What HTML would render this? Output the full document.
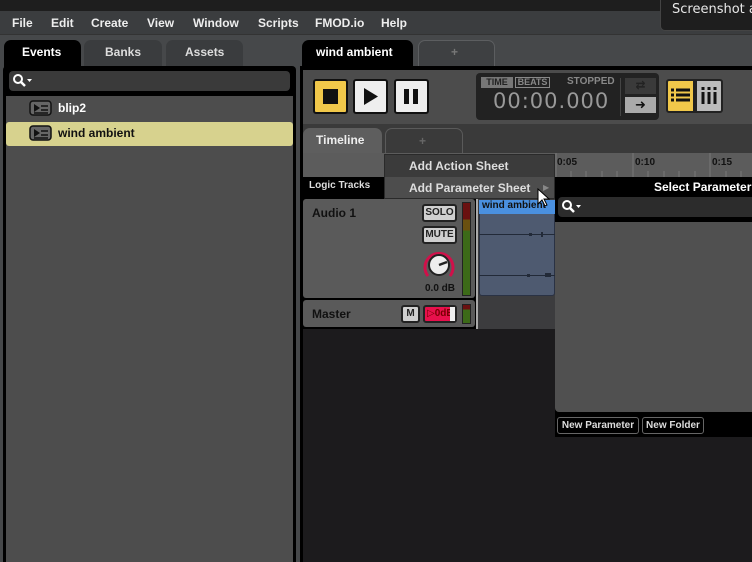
<!DOCTYPE html><html><head><meta charset="utf-8"><style>
*{margin:0;padding:0;box-sizing:border-box}
body{width:752px;height:562px;overflow:hidden;background:#46484a;font-family:"Liberation Sans","DejaVu Sans",sans-serif;font-weight:bold;position:relative;color:#fff}
.a{position:absolute}
.t{font-size:12px;white-space:nowrap}
.btn{position:absolute;background:#d0d0d0;border:2px solid #222;border-radius:3px;color:#222;font-size:10px;text-align:center}
</style></head><body>
<div class="a" style="left:0;top:0;width:752px;height:11px;background:#1e1e1e"></div>
<div class="a" style="left:0;top:11px;width:752px;height:24px;background:#3b3d3f;border-bottom:1px solid #333"></div>
<div class="a t" style="left:12px;top:16px;color:#eee">File</div>
<div class="a t" style="left:51px;top:16px;color:#eee">Edit</div>
<div class="a t" style="left:91px;top:16px;color:#eee">Create</div>
<div class="a t" style="left:147px;top:16px;color:#eee">View</div>
<div class="a t" style="left:193px;top:16px;color:#eee">Window</div>
<div class="a t" style="left:258px;top:16px;color:#eee">Scripts</div>
<div class="a t" style="left:315px;top:16px;color:#eee">FMOD.io</div>
<div class="a t" style="left:381px;top:16px;color:#eee">Help</div>
<div class="a" style="left:660px;top:0;width:92px;height:31px;background:#1e1e1e;border-radius:0 0 0 5px;border-left:1px solid #444;border-bottom:1px solid #444;overflow:hidden"></div>
<div class="a" style="left:672px;top:2px;font-size:13px;font-weight:normal;color:#e8e8e8;font-family:'DejaVu Sans',sans-serif;white-space:nowrap">Screenshot a</div>

<!-- left tabs -->
<div class="a" style="left:4px;top:40px;width:77px;height:28px;background:#000;border-radius:7px 7px 0 0"></div>
<div class="a t" style="left:22px;top:45px">Events</div>
<div class="a" style="left:84px;top:40px;width:78px;height:26px;background:#3a3c3e;border-radius:7px 7px 0 0"></div>
<div class="a t" style="left:105px;top:45px;color:#ddd">Banks</div>
<div class="a" style="left:166px;top:40px;width:77px;height:26px;background:#3a3c3e;border-radius:7px 7px 0 0"></div>
<div class="a t" style="left:185px;top:45px;color:#ddd">Assets</div>
<div class="a" style="left:3px;top:66px;width:293px;height:496px;background:#000;border-radius:4px 4px 0 0"></div>
<div class="a" style="left:9px;top:71px;width:281px;height:20px;background:#3a3a3a;border-radius:4px"></div>
<svg class="a" style="left:12px;top:73px" width="22" height="16"><circle cx="6" cy="6" r="4" fill="none" stroke="#fff" stroke-width="2"/><path d="M9 9l4 4" stroke="#fff" stroke-width="2.5"/><path d="M15 6h5l-2.5 3z" fill="#fff"/></svg>
<div class="a" style="left:6px;top:96px;width:287px;height:466px;background:#4d4d4d"></div>
<div class="a" style="left:6px;top:122px;width:287px;height:24px;background:#d7d28e;border-radius:3px"></div>
<svg class="a" style="left:29px;top:100px" width="24" height="16"><rect x="1" y="1" width="21" height="14" rx="3" fill="#666" stroke="#111" stroke-width="1.5"/><path d="M5 4l6 4-6 4z" fill="#111"/><path d="M12 6h7M12 10h7M5 13h14" stroke="#111" stroke-width="1.5"/></svg>
<div class="a t" style="left:58px;top:101px">blip2</div>
<svg class="a" style="left:29px;top:125px" width="24" height="16"><rect x="1" y="1" width="21" height="14" rx="3" fill="#666" stroke="#111" stroke-width="1.5"/><path d="M5 4l6 4-6 4z" fill="#111"/><path d="M12 6h7M12 10h7M5 13h14" stroke="#111" stroke-width="1.5"/></svg>
<div class="a t" style="left:58px;top:126px;color:#111">wind ambient</div>

<!-- right tabs -->
<div class="a" style="left:302px;top:40px;width:111px;height:28px;background:#000;border-radius:7px 7px 0 0"></div>
<div class="a t" style="left:316px;top:45px">wind ambient</div>
<div class="a" style="left:418px;top:40px;width:77px;height:26px;border:1.5px solid #5c5e60;border-bottom:none;border-radius:7px 7px 0 0;background:#3e4042"></div>
<div class="a t" style="left:451px;top:45px;color:#777">+</div>
<div class="a" style="left:300px;top:66px;width:452px;height:496px;background:#000"></div>
<div class="a" style="left:303px;top:70px;width:449px;height:54px;background:#4c4c4c"></div>
<div class="a" style="left:313px;top:79px;width:35px;height:35px;background:#f1c84a;border:2px solid #111;border-radius:3px"></div>
<div class="a" style="left:323px;top:89px;width:15px;height:15px;background:#111"></div>
<div class="a" style="left:353px;top:79px;width:35px;height:35px;background:#eee;border:2px solid #111;border-radius:3px"></div>
<svg class="a" style="left:362px;top:87px" width="18" height="19"><path d="M2 1l14 8.5L2 18z" fill="#111"/></svg>
<div class="a" style="left:394px;top:79px;width:35px;height:35px;background:#eee;border:2px solid #111;border-radius:3px"></div>
<div class="a" style="left:404px;top:89px;width:5px;height:15px;background:#111"></div>
<div class="a" style="left:413px;top:89px;width:5px;height:15px;background:#111"></div>
<div class="a" style="left:476px;top:73px;width:183px;height:47px;background:#222;border-radius:4px"></div>
<div class="a" style="left:481px;top:77px;width:32px;height:11px;background:#777;color:#222;font-size:9px;text-align:center;line-height:11px">TIME</div>
<div class="a" style="left:515px;top:77px;width:35px;height:11px;border:1px solid #888;color:#888;font-size:9px;text-align:center;line-height:9px">BEATS</div>
<div class="a" style="left:567px;top:76px;color:#888;font-size:10px">STOPPED</div>
<div class="a" style="left:493px;top:89px;color:#999;font-size:21px;font-weight:normal;letter-spacing:1px;font-family:'DejaVu Sans',sans-serif">00:00.000</div>
<div class="a" style="left:620px;top:78px;width:1px;height:38px;background:#444"></div>
<div class="a" style="left:625px;top:78px;width:31px;height:16px;background:#3a3a3a;color:#222;font-size:12px;text-align:center">⇄</div>
<div class="a" style="left:625px;top:97px;width:31px;height:16px;background:#aaa;color:#111;font-size:13px;text-align:center;line-height:16px">➜</div>
<div class="a" style="left:666px;top:79px;width:29px;height:34px;background:#f1c84a;border:2px solid #222;border-radius:3px 0 0 3px"></div>
<svg class="a" style="left:671px;top:88px" width="20" height="16"><path d="M0 2h3M5 2h14M0 7h3M5 7h14M0 12h3M5 12h14" stroke="#111" stroke-width="3"/></svg>
<div class="a" style="left:695px;top:79px;width:28px;height:34px;background:#bbb;border:2px solid #222;border-radius:0 3px 3px 0"></div>
<svg class="a" style="left:700px;top:87px" width="18" height="18"><path d="M3 0v3M9 0v3M15 0v3M3 5v12M9 5v12M15 5v12" stroke="#111" stroke-width="3"/></svg>

<div class="a" style="left:303px;top:124px;width:449px;height:30px;background:#3a3a3a"></div>
<div class="a" style="left:303px;top:128px;width:79px;height:50px;background:#5e5e5e;border-radius:7px 7px 0 0"></div>
<div class="a t" style="left:316px;top:133px;color:#eee">Timeline</div>
<div class="a" style="left:385px;top:128px;width:78px;height:27px;border:1.5px solid #5a5a5a;border-bottom:none;border-radius:7px 7px 0 0;background:#3a3a3a"></div>
<div class="a t" style="left:419px;top:134px;color:#666">+</div>
<div class="a" style="left:303px;top:153px;width:449px;height:24px;background:#5c5c5c"></div>
<svg class="a" style="left:555px;top:153px" width="197" height="24"><g stroke="#777" stroke-width="1"><path d="M1 0v24M78 0v24M155 0v24"/><path d="M16 18v6M31 18v6M47 18v6M62 18v6M93 18v6M109 18v6M124 18v6M140 18v6M171 18v6M186 18v6"/></g></svg>
<div class="a" style="left:557px;top:157px;font-size:10px;color:#111">0:05</div>
<div class="a" style="left:635px;top:157px;font-size:10px;color:#111">0:10</div>
<div class="a" style="left:712px;top:157px;font-size:10px;color:#111">0:15</div>
<div class="a" style="left:303px;top:177px;width:449px;height:21px;background:#000"></div>
<div class="a" style="left:309px;top:180px;font-size:10px;color:#ddd">Logic Tracks</div>
<div class="a t" style="left:654px;top:180px">Select Parameter</div>

<!-- tracks -->
<div class="a" style="left:303px;top:199px;width:172px;height:99px;background:#5a5a5a;border-radius:3px"></div>
<div class="a t" style="left:312px;top:206px;color:#111">Audio 1</div>
<div class="btn" style="left:422px;top:204px;width:35px;height:18px;line-height:14px">SOLO</div>
<div class="btn" style="left:422px;top:226px;width:35px;height:18px;line-height:14px">MUTE</div>
<svg class="a" style="left:420px;top:248px" width="38" height="34"><path d="M8 28A14 14 0 1 1 30 28" fill="none" stroke="#d0104a" stroke-width="3"/><circle cx="19" cy="17" r="10" fill="#eee" stroke="#222" stroke-width="2"/><path d="M19 17l8-3" stroke="#222" stroke-width="2.5"/></svg>
<div class="a" style="left:425px;top:283px;font-size:10px;color:#111">0.0 dB</div>
<div class="a" style="left:462px;top:202px;width:9px;height:94px;background:linear-gradient(#6a1010 0,#6a1010 18%,#6a5010 18%,#6a5010 30%,#3c6a18 30%);border:1px solid #222"></div>
<div class="a" style="left:303px;top:300px;width:172px;height:27px;background:#5a5a5a;border-radius:3px"></div>
<div class="a t" style="left:312px;top:307px;color:#111">Master</div>
<div class="btn" style="left:401px;top:305px;width:19px;height:18px;line-height:14px">M</div>
<div class="a" style="left:423px;top:305px;width:34px;height:18px;background:#e8104c;border:2px solid #222;border-radius:3px;font-size:10px;color:#700;line-height:14px;padding-left:2px">▷0dB</div>
<div class="a" style="left:450px;top:307px;width:5px;height:14px;background:#eee"></div>
<div class="a" style="left:462px;top:304px;width:9px;height:20px;background:linear-gradient(#6a1010 0,#6a1010 25%,#3c6a18 25%);border:1px solid #222"></div>
<div class="a" style="left:476px;top:198px;width:2px;height:132px;background:#aaa"></div>
<div class="a" style="left:478px;top:199px;width:77px;height:130px;background:#3c3c3e"></div>
<div class="a" style="left:479px;top:200px;width:76px;height:96px;background:#4e5a70;border:1px solid #2a3244;border-radius:3px"></div>
<div class="a" style="left:479px;top:200px;width:76px;height:14px;background:#4a90e0;font-size:10px;color:#111;padding-left:3px;overflow:hidden;white-space:nowrap">wind ambient</div>
<svg class="a" style="left:479px;top:230px" width="76" height="50"><path d="M0 4.5h76M0 45.5h76" stroke="#222a38" stroke-width="1"/><path d="M50 3h3v3h-3zM62 2h2v5h-2zM48 44h3v3h-3zM66 43h6v4h-6z" fill="#222a38"/></svg>
<div class="a" style="left:303px;top:329px;width:252px;height:233px;background:#1c1b1d"></div>
<div class="a" style="left:555px;top:437px;width:197px;height:125px;background:#1c1b1d"></div>

<!-- select parameter panel -->
<div class="a" style="left:555px;top:197px;width:197px;height:240px;background:#000"></div>
<div class="a" style="left:558px;top:197px;width:194px;height:20px;background:#2c2c2c;border-radius:4px 0 0 4px"></div>
<svg class="a" style="left:561px;top:199px" width="22" height="16"><circle cx="6" cy="6" r="4" fill="none" stroke="#fff" stroke-width="2"/><path d="M9 9l4 4" stroke="#fff" stroke-width="2.5"/><path d="M15 6h5l-2.5 3z" fill="#fff"/></svg>
<div class="a" style="left:555px;top:222px;width:197px;height:190px;background:#505050;border-radius:0 0 0 4px"></div>
<div class="a" style="left:557px;top:417px;width:82px;height:17px;border:1px solid #666;border-radius:3px;font-size:10px;line-height:15px;text-align:center;color:#ddd">New Parameter</div>
<div class="a" style="left:642px;top:417px;width:62px;height:17px;border:1px solid #666;border-radius:3px;font-size:10px;line-height:15px;text-align:center;color:#ddd">New Folder</div>

<!-- context menu -->
<div class="a" style="left:384px;top:154px;width:171px;height:45px;background:#3b3b3b;border:1px solid #2a2a2a"></div>
<div class="a" style="left:385px;top:177px;width:169px;height:21px;background:#4d4d4d"></div>
<div class="a t" style="left:409px;top:159px;color:#ddd">Add Action Sheet</div>
<div class="a t" style="left:409px;top:181px;color:#ddd">Add Parameter Sheet</div>
<div class="a" style="left:543px;top:183px;font-size:8px;color:#888">▶</div>
<svg class="a" style="left:537px;top:188px" width="14" height="20"><path d="M1 1v15l4-4 3 6 2-1-3-6h5z" fill="#fff" stroke="#000" stroke-width="1"/></svg>
</body></html>
